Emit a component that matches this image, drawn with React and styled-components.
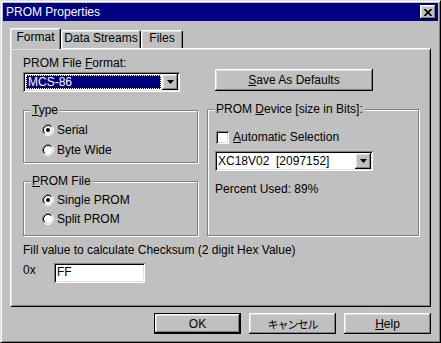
import React from 'react';
import styled, { createGlobalStyle } from 'styled-components';

const GlobalStyle = createGlobalStyle`
  html, body {
    margin: 0;
    padding: 0;
    background: #c0c0c0;
  }
  body {
    font-family: "Liberation Sans", Arial, "Noto Sans CJK JP", sans-serif;
    font-size: 12px;
    line-height: 14px;
    color: #000;
  }
`;

const raised = `
  box-shadow: inset -1px -1px #000, inset 1px 1px #fff, inset -2px -2px #808080, inset 2px 2px #dfdfdf;
`;

const sunken = `
  box-shadow: inset 1px 1px #808080, inset -1px -1px #fff, inset 2px 2px #000, inset -2px -2px #dfdfdf;
`;

const Window = styled.div`
  box-sizing: border-box;
  width: 441px;
  height: 343px;
  background: #c0c0c0;
  border: 1px solid;
  border-color: #dfdfdf #000 #000 #dfdfdf;
  box-shadow: inset 1px 1px #fff, inset -1px -1px #808080;
  padding: 2px;
  display: flex;
  flex-direction: column;
`;

const TitleBar = styled.div`
  height: 18px;
  flex: 0 0 18px;
  background: #000080;
  color: #fff;
  display: flex;
  align-items: center;
  padding: 0 2px 0 3px;
  line-height: 18px;
`;

const TitleText = styled.span`
  flex: 1;
`;

const CloseButton = styled.div`
  width: 16px;
  height: 14px;
  background: #c0c0c0;
  display: flex;
  align-items: center;
  justify-content: center;
  ${raised}
`;

const Body = styled.div`
  display: flex;
  flex-direction: column;
  padding: 7px 7px 0 7px;
`;

const TabRow = styled.div`
  display: flex;
  align-items: flex-end;
  height: 21px;
  margin-bottom: -1px;
  position: relative;
  z-index: 1;
`;

const Tab = styled.div`
  box-sizing: border-box;
  width: ${p => p.$w}px;
  height: ${p => (p.$active ? 21 : 18)}px;
  margin-bottom: ${p => (p.$active ? 0 : 1)}px;
  background: #c0c0c0;
  border-top: 1px solid #fff;
  border-left: 1px solid #fff;
  border-right: 1px solid #000;
  border-radius: 2px 2px 0 0;
  box-shadow: inset -1px 0 #808080, inset 1px 1px #dfdfdf;
  padding-top: ${p => (p.$active ? 1 : 0)}px;
  text-align: center;
`;

const Panel = styled.div`
  box-sizing: border-box;
  height: 259px;
  border: 1px solid;
  border-color: #fff #000 #000 #fff;
  box-shadow: inset 1px 1px #dfdfdf, inset -1px -1px #808080;
  padding: 7px 11px 0 12px;
  display: flex;
  flex-direction: column;
`;

const Columns = styled.div`
  display: grid;
  grid-template-columns: 175px 212px;
  column-gap: 9px;
`;

const Column = styled.div`
  display: flex;
  flex-direction: column;
`;

const Label = styled.div`
  height: 14px;
  white-space: nowrap;
  margin-top: ${p => p.$mt || 0}px;
`;

const Field = styled.div`
  box-sizing: border-box;
  display: flex;
  align-items: ${p => (p.$top ? 'flex-start' : 'center')};
  width: ${p => p.$w}px;
  height: ${p => p.$h || 20}px;
  margin-top: ${p => p.$mt || 0}px;
  margin-left: ${p => p.$ml || 0}px;
  padding: 2px;
  background: #fff;
  white-space: pre;
  ${sunken}
`;

const FieldText = styled.span`
  flex: 1;
  padding-left: 1px;
`;

const Selection = styled.span`
  flex: 1;
  align-self: stretch;
  margin: 1px 1px 1px 1px;
  padding-left: 2px;
  background: #000080;
  color: #fff;
  outline: 1px dotted #ffffa0;
  outline-offset: -1px;
  line-height: 14px;
`;

const DropButton = styled.div`
  width: 16px;
  align-self: stretch;
  background: #c0c0c0;
  display: flex;
  align-items: center;
  justify-content: center;
  ${raised}
`;

const Button = styled.div`
  box-sizing: border-box;
  width: ${p => p.$w}px;
  height: ${p => p.$h}px;
  margin-top: ${p => p.$mt || 0}px;
  margin-left: ${p => p.$ml || 0}px;
  background: #c0c0c0;
  display: flex;
  align-items: center;
  justify-content: center;
  border: ${p => (p.$default ? '1px solid #000' : 'none')};
  ${raised}
`;

const Cjk = styled.span`
  font-family: "Noto Sans CJK JP", sans-serif;
  font-size: 11px;
  letter-spacing: -1px;
`;

const Group = styled.div`
  position: relative;
  box-sizing: border-box;
  height: ${p => p.$h}px;
  margin-top: ${p => p.$mt}px;
  border: 1px solid #808080;
  box-shadow: inset 1px 1px #fff, 1px 1px #fff;
  padding: ${p => p.$pad};
  display: flex;
  flex-direction: column;
  gap: ${p => p.$gap || 0}px;
`;

const Legend = styled.span`
  position: absolute;
  top: -8px;
  left: 6px;
  padding: 0 2px;
  background: #c0c0c0;
  line-height: 14px;
  white-space: nowrap;
`;

const OptionRow = styled.div`
  display: flex;
  align-items: center;
  gap: ${p => p.$gap || 3}px;
  height: 14px;
  margin-left: ${p => p.$ml || 0}px;
`;

const CheckBox = styled.span`
  box-sizing: border-box;
  width: 13px;
  height: 13px;
  background: #fff;
  ${sunken}
`;

const InputRow = styled.div`
  display: flex;
  align-items: flex-start;
  margin-top: 6px;
`;

const Prefix = styled.span`
  width: 31px;
`;

const Footer = styled.div`
  display: flex;
  justify-content: flex-end;
  gap: 8px;
  margin-top: 6px;
`;

const Radio = ({ checked }) => (
  <svg width="12" height="12" viewBox="0 0 12 12">
    <circle cx="6" cy="6" r="4.2" fill="#fff" />
    <path d="M2.11 9.89 A5.5 5.5 0 0 1 9.89 2.11" fill="none" stroke="#808080" />
    <path d="M9.89 2.11 A5.5 5.5 0 0 1 2.11 9.89" fill="none" stroke="#fff" />
    <path d="M2.82 9.18 A4.5 4.5 0 0 1 9.18 2.82" fill="none" stroke="#000" />
    <path d="M9.18 2.82 A4.5 4.5 0 0 1 2.82 9.18" fill="none" stroke="#dfdfdf" />
    {checked && <circle cx="6" cy="6" r="2" fill="#000" />}
  </svg>
);

const Arrow = () => (
  <svg width="7" height="4" viewBox="0 0 7 4">
    <path d="M0 0 H7 L3.5 4 Z" fill="#000" />
  </svg>
);

const CloseGlyph = () => (
  <svg width="8" height="7" viewBox="0 0 8 7">
    <path d="M0.5 0 L7.5 7 M7.5 0 L0.5 7" stroke="#000" strokeWidth="1.7" />
  </svg>
);

export default function App() {
  return (
    <>
      <GlobalStyle />
      <Window>
        <TitleBar>
          <TitleText>PROM Properties</TitleText>
          <CloseButton><CloseGlyph /></CloseButton>
        </TitleBar>
        <Body>
          <TabRow>
            <Tab $w={51} $active>Format</Tab>
            <Tab $w={80}>Data Streams</Tab>
            <Tab $w={42}>Files</Tab>
          </TabRow>
          <Panel>
            <Columns>
              <Column>
                <Label>PROM File <u>F</u>ormat:</Label>
                <Field $w={157} $mt={2}>
                  <Selection>MCS-86</Selection>
                  <DropButton><Arrow /></DropButton>
                </Field>
                <Group $h={53} $mt={18} $pad="12px 0 0 18px" $gap={6}>
                  <Legend><u>T</u>ype</Legend>
                  <OptionRow><Radio checked />Serial</OptionRow>
                  <OptionRow><Radio />Byte Wide</OptionRow>
                </Group>
                <Group $h={55} $mt={18} $pad="11px 0 0 18px" $gap={5}>
                  <Legend><u>P</u>ROM File</Legend>
                  <OptionRow><Radio checked />Single PROM</OptionRow>
                  <OptionRow><Radio />Split PROM</OptionRow>
                </Group>
              </Column>
              <Column>
                <Button $w={158} $h={22} $mt={13} $ml={8}><span><u>S</u>ave As Defaults</span></Button>
                <Group $h={127} $mt={18} $pad="20px 0 0 7px">
                  <Legend>PROM <u>D</u>evice [size in Bits]:</Legend>
                  <OptionRow $ml={1} $gap={4}><CheckBox /><span><u>A</u>utomatic Selection</span></OptionRow>
                  <Field $w={158} $mt={7}>
                    <FieldText>XC18V02  [2097152]</FieldText>
                    <DropButton><Arrow /></DropButton>
                  </Field>
                  <Label $mt={11}>Percent Used: 89%</Label>
                </Group>
              </Column>
            </Columns>
            <Label $mt={7}>Fill value to calculate Checksum (2 digit Hex Value)</Label>
            <InputRow>
              <Prefix>0x</Prefix>
              <Field $w={91} $top>
                <FieldText>FF</FieldText>
              </Field>
            </InputRow>
          </Panel>
          <Footer>
            <Button $w={87} $h={21} $default>OK</Button>
            <Button $w={87} $h={21}><Cjk>キャンセル</Cjk></Button>
            <Button $w={87} $h={21}><span><u>H</u>elp</span></Button>
          </Footer>
        </Body>
      </Window>
    </>
  );
}
